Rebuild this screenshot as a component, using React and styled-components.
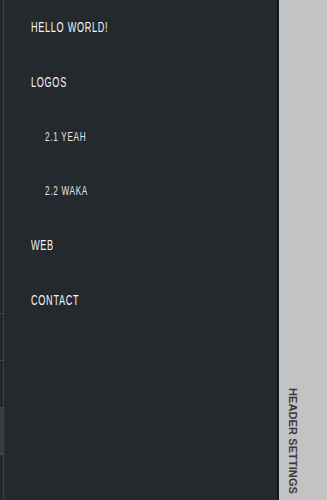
import React from "react";
import styled, { createGlobalStyle } from "styled-components";

const Global = createGlobalStyle`
  html, body { margin: 0; padding: 0; background: #24292e; }
  #root { height: 500px; }
`;

const Page = styled.div`
  display: flex;
  height: 500px;
  width: 327px;
  overflow: hidden;
`;

const Strip = styled.div`
  width: 3px;
  flex: none;
  border-right: 1px solid #3a4148;
  background: #22272c;
  display: flex;
  flex-direction: column;
`;

const StripSpacer = styled.div`
  height: 313px;
  flex: none;
`;

const StripRow = styled.div`
  height: 46px;
  flex: none;
  border-top: 1px solid #414950;
  background: ${(p) => (p.$active ? "#343c44" : "transparent")};
`;

const Nav = styled.nav`
  width: 273px;
  flex: none;
  background: #24292e;
  display: flex;
  flex-direction: column;
`;

const NavItem = styled.a`
  height: 54.5px;
  flex: none;
  display: flex;
  align-items: center;
  padding-left: ${(p) => (p.$sub ? "41px" : "27px")};
  color: ${(p) => (p.$sub ? "#e4e6e8" : "#f2f3f4")};
  font-family: "Liberation Sans", Arial, sans-serif;
  font-size: ${(p) => (p.$sub ? "13px" : "14.5px")};
  letter-spacing: 1.1px;
  text-decoration: none;
  white-space: nowrap;
`;

const Label = styled.span`
  display: inline-block;
  transform: scaleX(0.63);
  transform-origin: left center;
`;

const Divider = styled.div`
  width: 2px;
  flex: none;
  background: #15181b;
`;

const Side = styled.aside`
  width: 48px;
  flex: none;
  background: #c3c3c3;
  display: flex;
  flex-direction: column;
  justify-content: flex-end;
  align-items: flex-start;
  padding: 0 0 6px 8px;
  box-sizing: border-box;
`;

const SideLabel = styled.div`
  writing-mode: vertical-rl;
  font-family: "Liberation Sans", Arial, sans-serif;
  font-weight: bold;
  font-size: 11px;
  letter-spacing: 0.1px;
  color: #3a3a3a;
  white-space: nowrap;
`;

const items = [
  { label: "HELLO WORLD!" },
  { label: "LOGOS" },
  { label: "2.1 YEAH", sub: true },
  { label: "2.2 WAKA", sub: true },
  { label: "WEB" },
  { label: "CONTACT" },
];

export default function App() {
  return (
    <>
      <Global />
      <Page>
        <Strip>
          <StripSpacer />
          <StripRow />
          <StripRow />
          <StripRow $active />
          <StripRow />
        </Strip>
        <Nav>
          {items.map((it) => (
            <NavItem key={it.label} href="#" $sub={it.sub}>
              <Label>{it.label}</Label>
            </NavItem>
          ))}
        </Nav>
        <Divider />
        <Side>
          <SideLabel>HEADER SETTINGS</SideLabel>
        </Side>
      </Page>
    </>
  );
}
